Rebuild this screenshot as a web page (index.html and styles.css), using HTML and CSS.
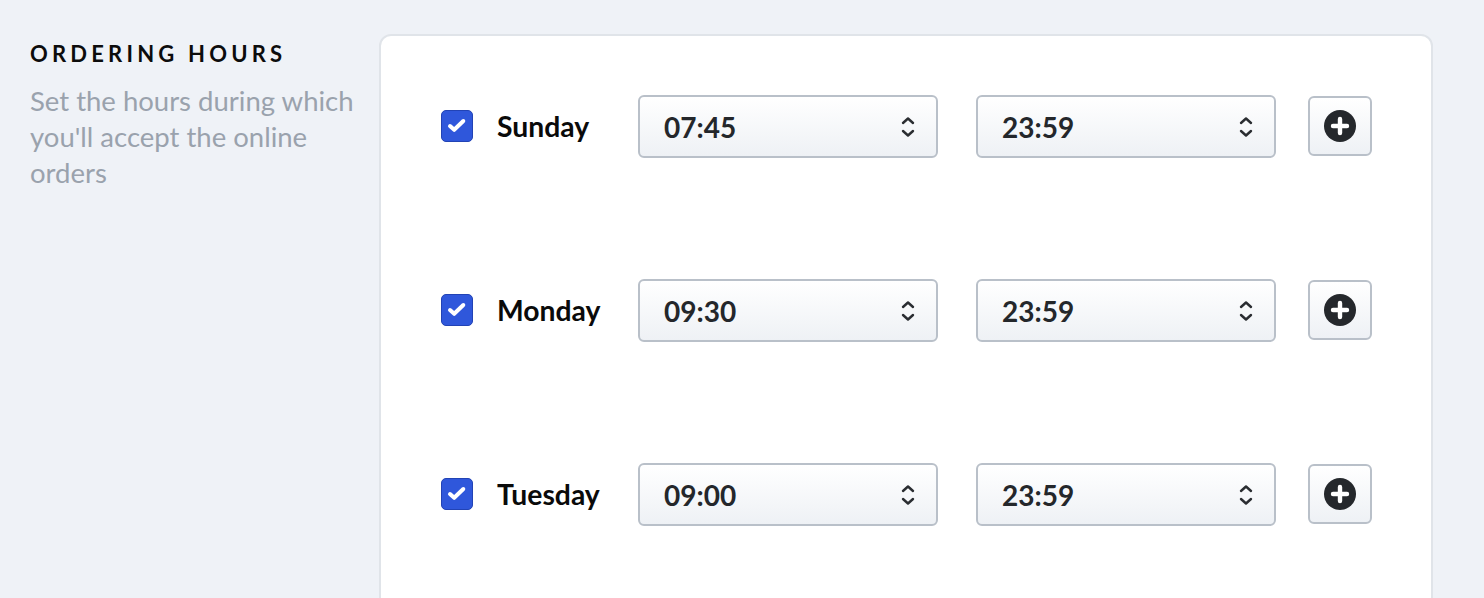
FILE: index.html
```html
<!DOCTYPE html>
<html>
<head>
<meta charset="utf-8">
<link rel="stylesheet" href="styles.css">
</head>
<body>
<div class="page">
  <aside class="intro">
    <h2 class="intro-title">Ordering Hours</h2>
    <p class="intro-text">Set the hours during which you'll accept the online orders</p>
  </aside>
  <section class="card">
    <div class="row">
      <span class="check"><svg viewBox="0 0 30 30" width="30" height="30"><path d="M8 15 L12.2 18.8 L21.3 10" fill="none" stroke="#fff" stroke-width="4" stroke-linecap="round" stroke-linejoin="round"/></svg></span>
      <span class="day">Sunday</span>
      <div class="select"><span class="time">07:45</span><svg class="chev" viewBox="0 0 14 22" width="14" height="22"><path d="M2 7 L7 2.5 L12 7 M2 15 L7 19.5 L12 15" fill="none" stroke="#2a2d31" stroke-width="2.4" stroke-linecap="round" stroke-linejoin="round"/></svg></div>
      <div class="select"><span class="time">23:59</span><svg class="chev" viewBox="0 0 14 22" width="14" height="22"><path d="M2 7 L7 2.5 L12 7 M2 15 L7 19.5 L12 15" fill="none" stroke="#2a2d31" stroke-width="2.4" stroke-linecap="round" stroke-linejoin="round"/></svg></div>
      <button class="add"><svg viewBox="0 0 32 32" width="32" height="32"><circle cx="16" cy="16" r="16" fill="#25282c"/><path d="M16 9 V23 M9 16 H23" stroke="#fff" stroke-width="4.4" stroke-linecap="round"/></svg></button>
    </div>
    <div class="row">
      <span class="check"><svg viewBox="0 0 30 30" width="30" height="30"><path d="M8 15 L12.2 18.8 L21.3 10" fill="none" stroke="#fff" stroke-width="4" stroke-linecap="round" stroke-linejoin="round"/></svg></span>
      <span class="day">Monday</span>
      <div class="select"><span class="time">09:30</span><svg class="chev" viewBox="0 0 14 22" width="14" height="22"><path d="M2 7 L7 2.5 L12 7 M2 15 L7 19.5 L12 15" fill="none" stroke="#2a2d31" stroke-width="2.4" stroke-linecap="round" stroke-linejoin="round"/></svg></div>
      <div class="select"><span class="time">23:59</span><svg class="chev" viewBox="0 0 14 22" width="14" height="22"><path d="M2 7 L7 2.5 L12 7 M2 15 L7 19.5 L12 15" fill="none" stroke="#2a2d31" stroke-width="2.4" stroke-linecap="round" stroke-linejoin="round"/></svg></div>
      <button class="add"><svg viewBox="0 0 32 32" width="32" height="32"><circle cx="16" cy="16" r="16" fill="#25282c"/><path d="M16 9 V23 M9 16 H23" stroke="#fff" stroke-width="4.4" stroke-linecap="round"/></svg></button>
    </div>
    <div class="row">
      <span class="check"><svg viewBox="0 0 30 30" width="30" height="30"><path d="M8 15 L12.2 18.8 L21.3 10" fill="none" stroke="#fff" stroke-width="4" stroke-linecap="round" stroke-linejoin="round"/></svg></span>
      <span class="day">Tuesday</span>
      <div class="select"><span class="time">09:00</span><svg class="chev" viewBox="0 0 14 22" width="14" height="22"><path d="M2 7 L7 2.5 L12 7 M2 15 L7 19.5 L12 15" fill="none" stroke="#2a2d31" stroke-width="2.4" stroke-linecap="round" stroke-linejoin="round"/></svg></div>
      <div class="select"><span class="time">23:59</span><svg class="chev" viewBox="0 0 14 22" width="14" height="22"><path d="M2 7 L7 2.5 L12 7 M2 15 L7 19.5 L12 15" fill="none" stroke="#2a2d31" stroke-width="2.4" stroke-linecap="round" stroke-linejoin="round"/></svg></div>
      <button class="add"><svg viewBox="0 0 32 32" width="32" height="32"><circle cx="16" cy="16" r="16" fill="#25282c"/><path d="M16 9 V23 M9 16 H23" stroke="#fff" stroke-width="4.4" stroke-linecap="round"/></svg></button>
    </div>
  </section>
</div>
</body>
</html>
```
FILE: styles.css
```css
html, body {
  margin: 0;
  padding: 0;
  height: 100%;
  overflow: hidden;
}
body {
  background: #eff2f7;
  font-family: Lato, "Liberation Sans", sans-serif;
  color: #111;
}
.page {
  display: flex;
  align-items: flex-start;
  padding-top: 34px;
}
.intro {
  flex: 0 0 379px;
  box-sizing: border-box;
  padding: 0 12px 0 30px;
}
.intro-title {
  margin: 6px 0 0;
  font-size: 22px;
  line-height: 28px;
  font-weight: 700;
  letter-spacing: 4.2px;
  text-transform: uppercase;
  color: #0c0c0c;
}
.intro-text {
  margin: 15px 0 0;
  font-size: 27.5px;
  line-height: 36px;
  color: #9aa2ad;
}
.card {
  width: 1054px;
  min-height: 700px;
  box-sizing: border-box;
  background: #fff;
  border: 2px solid #e0e4e9;
  border-radius: 12px;
  padding: 59px 0 0 60px;
  display: flex;
  flex-direction: column;
  gap: 121px;
}
.row {
  display: flex;
  align-items: flex-start;
  height: 63px;
}
.check {
  flex: 0 0 auto;
  width: 32px;
  height: 32px;
  box-sizing: border-box;
  margin-top: 15px;
  background: #2f57db;
  border: 1px solid #2243b5;
  border-radius: 5px;
  display: flex;
  align-items: center;
  justify-content: center;
}
.check svg {
  display: block;
}
.day {
  flex: 0 0 141px;
  margin-left: 24px;
  font-size: 28.3px;
  font-weight: 700;
  line-height: 63px;
  color: #0a0a0a;
}
.select {
  flex: 0 0 300px;
  height: 63px;
  box-sizing: border-box;
  border: 2px solid #b9c0c9;
  border-radius: 6px;
  background: linear-gradient(#ffffff, #eef1f5);
  display: flex;
  align-items: center;
  justify-content: space-between;
  padding: 0 21px 0 24px;
  margin-right: 38px;
}
.select + .select {
  margin-right: 32px;
}
.time {
  font-size: 28px;
  font-weight: 700;
  color: #24272b;
}
.chev {
  display: block;
}
.add {
  flex: 0 0 64px;
  height: 60px;
  margin-top: 1px;
  box-sizing: border-box;
  border: 2px solid #b9c0c9;
  border-radius: 6px;
  background: linear-gradient(#ffffff, #eef1f5);
  padding: 0;
  display: flex;
  align-items: center;
  justify-content: center;
}
.add svg {
  display: block;
}
```
